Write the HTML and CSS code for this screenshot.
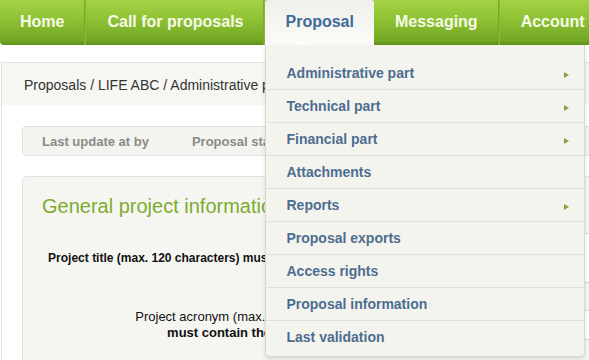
FILE: index.html
```html
<!DOCTYPE html>
<html lang="en">
<head>
<meta charset="utf-8">
<title>Proposal</title>
<link rel="stylesheet" href="styles.css">
</head>
<body>
<nav class="topnav">
  <ul class="nav-list">
    <li class="nav-item first"><a href="#">Home</a></li>
    <li class="nav-item"><a href="#">Call for proposals</a></li>
    <li class="nav-item active"><a href="#">Proposal</a>
      <ul class="dropdown">
        <li class="dd-item sub"><a href="#">Administrative part</a></li>
        <li class="dd-item sub"><a href="#">Technical part</a></li>
        <li class="dd-item sub"><a href="#">Financial part</a></li>
        <li class="dd-item"><a href="#">Attachments</a></li>
        <li class="dd-item sub"><a href="#">Reports</a></li>
        <li class="dd-item"><a href="#">Proposal exports</a></li>
        <li class="dd-item"><a href="#">Access rights</a></li>
        <li class="dd-item"><a href="#">Proposal information</a></li>
        <li class="dd-item"><a href="#">Last validation</a></li>
      </ul>
    </li>
    <li class="nav-item"><a href="#">Messaging</a></li>
    <li class="nav-item last"><a href="#">Account</a></li>
  </ul>
</nav>

<div class="page">
  <div class="breadcrumb">Proposals / LIFE ABC / Administrative part / General information</div>
  <div class="content">
    <div class="status-bar">
      <span class="status-item">Last update at by</span>
      <span class="status-item">Proposal status: Draft</span>
    </div>
    <section class="panel">
      <h2 class="panel-title">General project information</h2>
      <div class="form">
        <div class="form-row">
          <label class="form-label title-label">Project title (max. 120 characters) must not be empty.</label>
          <div class="field field-tall"></div>
        </div>
        <div class="form-row row-two">
          <label class="form-label acronym-label">Project acronym (max. 25 characters)<br><strong>must contain the full acronym</strong></label>
          <div class="field"></div>
        </div>
      </div>
    </section>
  </div>
</div>
</body>
</html>
```
FILE: styles.css
```css
* { box-sizing: border-box; }
html, body { margin: 0; padding: 0; }
body {
  font-family: "Liberation Sans", Arial, sans-serif;
  background: #ffffff;
  color: #222;
  width: 589px;
  height: 360px;
  overflow: hidden;
}
a { text-decoration: none; }
ul { list-style: none; margin: 0; padding: 0; }

.topnav {
  height: 45px;
  background: linear-gradient(#a5d146 0%, #8dc134 45%, #73a623 90%, #5f901a 100%);
  border-bottom-left-radius: 4px;
  width: 620px;
}
.nav-list {
  display: flex;
  height: 45px;
}
.nav-item {
  position: relative;
  height: 45px;
  border-right: 1px solid #88b836;
  box-shadow: inset -1px 0 0 #7aaa27;
}
.nav-item.last { border-right: none; box-shadow: none; }
.nav-item > a {
  display: block;
  padding: 0 21px;
  line-height: 44px;
  font-size: 16px;
  font-weight: bold;
  color: #f7fbe6;
}
.nav-item.first > a { padding-left: 20px; }
.nav-item.active {
  background: linear-gradient(#eef0ea 0%, #f6f7f3 60%, #fbfcf9 100%);
  border-radius: 3px 3px 0 0;
  border-right: none;
  box-shadow: none;
}
.nav-item.active > a { color: #3f6a9a; padding: 0 20px; }
.nav-item.active::after {
  content: "";
  position: absolute;
  left: 30px;
  bottom: 0;
  border-left: 6px solid transparent;
  border-right: 6px solid transparent;
  border-bottom: 6px solid #ffffff;
  opacity: 0.8;
}

.dropdown {
  position: absolute;
  top: 45px;
  left: 0;
  width: 320px;
  padding: 12px 0 2px;
  background: #f4f4ef;
  border: 1px solid #d9d9d4;
  border-top: none;
  border-radius: 0 0 4px 4px;
  box-shadow: 0 2px 4px rgba(0,0,0,0.12);
  z-index: 10;
}
.dd-item {
  position: relative;
  height: 33px;
  border-bottom: 1px solid #e1e1dc;
}
.dd-item:last-child { border-bottom: none; }
.dd-item > a {
  display: block;
  padding-left: 20px;
  line-height: 32px;
  font-size: 14px;
  font-weight: bold;
  color: #4d6d90;
}
.dd-item.sub::after {
  content: "";
  position: absolute;
  right: 15px;
  top: 15px;
  border-top: 3.5px solid transparent;
  border-bottom: 3.5px solid transparent;
  border-left: 5px solid #7fa43c;
}

.page {
  margin-top: 17px;
  border-left: 1px solid #e3e3e0;
  margin-left: 1px;
}
.breadcrumb {
  height: 43px;
  line-height: 44px;
  background: #f6f7f2;
  border-top: 1px solid #e2e2df;
  padding-left: 22px;
  font-size: 14px;
  color: #333;
  white-space: nowrap;
}
.content {
  padding: 21px 0 0 20px;
}
.status-bar {
  display: flex;
  gap: 43px;
  height: 30px;
  width: 700px;
  padding-left: 19px;
  background: #f3f4ef;
  border: 1px solid #e2e3de;
  border-radius: 4px;
  line-height: 30px;
  font-size: 13px;
  font-weight: bold;
  color: #8a8a88;
  white-space: nowrap;
}
.panel {
  margin-top: 20px;
  width: 700px;
  height: 260px;
  background: #f5f6f1;
  border: 1px solid #e2e3de;
  border-radius: 5px;
  padding: 17px 19px;
}
.panel-title {
  margin: 0;
  font-size: 20px;
  line-height: 24px;
  font-weight: normal;
  color: #7dab2f;
  white-space: nowrap;
}
.form { margin-top: 15px; }
.form-row {
  display: grid;
  grid-template-columns: 310px 300px;
  column-gap: 14px;
  align-items: center;
}
.row-two { margin-top: 26px; }
.form-label {
  text-align: right;
  white-space: nowrap;
  color: #111;
}
.title-label {
  font-size: 12px;
  font-weight: bold;
  line-height: 16px;
}
.acronym-label {
  font-size: 13px;
  line-height: 16px;
}
.acronym-label strong { font-weight: bold; }
.field {
  height: 30px;
  background: #ffffff;
  border: 1px solid #d6d6d2;
}
.field-tall { height: 50px; }
```
